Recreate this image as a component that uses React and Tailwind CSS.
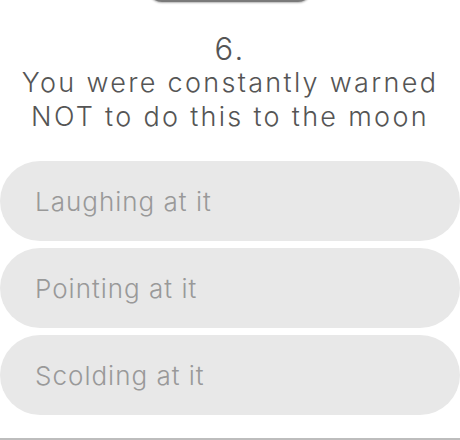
import React from "react";

const options = ["Laughing at it", "Pointing at it", "Scolding at it"];

const App = () => {
  return (
    <div
      className="relative w-[460px] h-[440px] overflow-hidden bg-white"
      style={{ fontFamily: "Inter, 'Noto Sans', sans-serif" }}
    >
      <div className="flex justify-center">
        <div className="w-[164px] h-[40px] -mt-[38px] rounded-[14px] bg-[#7a7a7a] shadow-[0_1px_2px_rgba(0,0,0,0.3)]" />
      </div>

      <div className="mt-[32px] text-center text-[#555] font-light text-[27px] leading-[34px] tracking-[2.3px]">
        <div className="text-[31px] leading-[30px]">6.</div>
        <div className="mt-[2px]">You were constantly warned</div>
        <div>NOT to do this to the moon</div>
      </div>

      <div className="mt-[27px] flex flex-col gap-[7px]">
        {options.map((opt) => (
          <button
            key={opt}
            className="h-[80px] w-[460px] rounded-full bg-[#e8e8e8] pl-[35px] text-left text-[26px] font-light tracking-[1px] text-[#999]"
          >
            {opt}
          </button>
        ))}
      </div>

      <div className="absolute bottom-0 left-0 w-full h-[2px] bg-[#bdbdbd]" />
    </div>
  );
};

export default App;
